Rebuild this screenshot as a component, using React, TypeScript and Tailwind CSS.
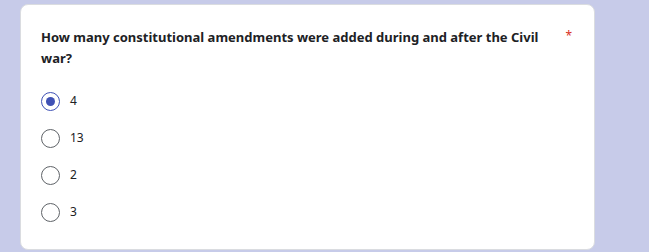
import React from "react";

const options = ["4", "13", "2", "3"];

export default function App() {
  return (
    <div className="w-[649px] h-[252px] bg-[#c7cbe9] pt-[4px] pl-[20px] overflow-hidden" style={{ fontFamily: '"Noto Sans", sans-serif' }}>
      <div className="w-[575px] h-[246px] bg-white rounded-[8px] border border-[#dadce0] pl-[20px] pr-[20px] pt-[22px]">
        <div className="flex items-start">
          <div className="w-[510px] text-[13px] font-bold leading-[21px] text-[#202124]">
            How many constitutional amendments were added during and after the Civil war?
          </div>
          <div className="ml-auto mr-[2px] text-[#d93025] text-[12px] leading-[21px] -mt-[2px]">*</div>
        </div>
        <div className="mt-[22px] flex flex-col gap-[17px]">
          {options.map((o, i) => (
            <div key={o} className="flex items-center h-[20px]">
              <div
                className={
                  i === 0
                    ? "w-[19px] h-[19px] rounded-full border-[1.5px] border-[#3f51b5] flex items-center justify-center"
                    : "w-[19px] h-[19px] rounded-full border border-[#5f6368] flex items-center justify-center"
                }
              >
                {i === 0 && <div className="w-[9px] h-[9px] rounded-full bg-[#3f51b5]" />}
              </div>
              <span className="ml-[10px] text-[12px] text-[#202124]">{o}</span>
            </div>
          ))}
        </div>
      </div>
    </div>
  );
}
